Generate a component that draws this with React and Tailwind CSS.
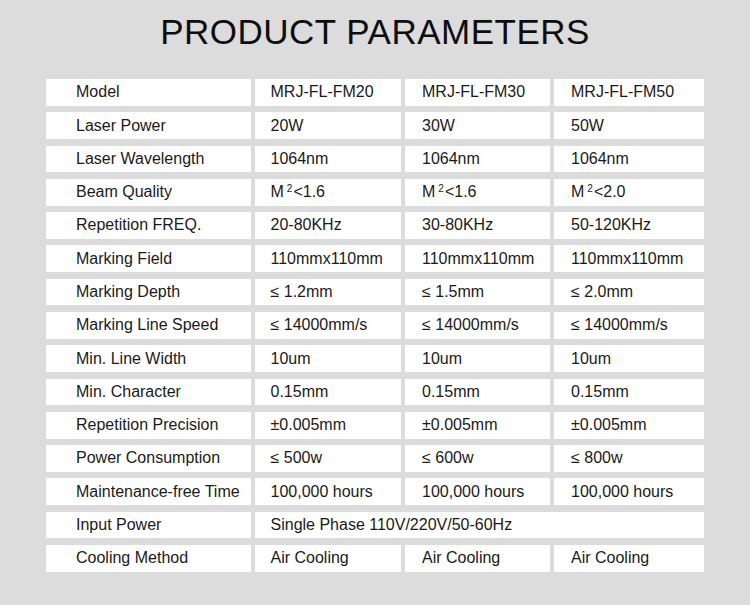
const M2 = ({ v }) => (
  <span>
    M<sup className="ml-[3px] mr-[1px] text-[10px] top-[-0.55em]">2</sup>&lt;{v}
  </span>
);

const ROWS = [
  ['Model', 'MRJ-FL-FM20', 'MRJ-FL-FM30', 'MRJ-FL-FM50'],
  ['Laser Power', '20W', '30W', '50W'],
  ['Laser Wavelength', '1064nm', '1064nm', '1064nm'],
  ['Beam Quality', <M2 v="1.6" />, <M2 v="1.6" />, <M2 v="2.0" />],
  ['Repetition FREQ.', '20-80KHz', '30-80KHz', '50-120KHz'],
  ['Marking Field', '110mmx110mm', '110mmx110mm', '110mmx110mm'],
  ['Marking Depth', '≤ 1.2mm', '≤ 1.5mm', '≤ 2.0mm'],
  ['Marking Line Speed', '≤ 14000mm/s', '≤ 14000mm/s', '≤ 14000mm/s'],
  ['Min. Line Width', '10um', '10um', '10um'],
  ['Min. Character', '0.15mm', '0.15mm', '0.15mm'],
  ['Repetition Precision', '±0.005mm', '±0.005mm', '±0.005mm'],
  ['Power Consumption', '≤ 500w', '≤ 600w', '≤ 800w'],
  ['Maintenance-free Time', '100,000 hours', '100,000 hours', '100,000 hours'],
  ['Input Power', 'Single Phase 110V/220V/50-60Hz'],
  ['Cooling Method', 'Air Cooling', 'Air Cooling', 'Air Cooling'],
];

const pads = ['pl-[30px]', 'pl-[15.5px]', 'pl-[17px]', 'pl-[17px]'];

export default function App() {
  return (
    <div className="w-[750px] h-[605px] bg-[#dcdcdc] text-[#1a1a1a] font-['Liberation_Sans',Arial,sans-serif] overflow-hidden">
      <h1 className="pt-[14px] text-center text-[35px] leading-none text-[#0d0d0d] tracking-[0.5px]">PRODUCT PARAMETERS</h1>
      <div className="mt-[30px] ml-[46px] grid grid-cols-[205px_146px_145px_150px] gap-x-[4px] gap-y-[6.6px] text-[16px]">
        {ROWS.map((row, i) =>
          row.map((cell, j) => (
            <div
              key={i + '-' + j}
              className={`h-[26.7px] bg-white flex items-center whitespace-nowrap ${pads[j]} ${row.length === 2 && j === 1 ? 'col-span-3' : ''}`}
            >
              {cell}
            </div>
          ))
        )}
      </div>
    </div>
  );
}
